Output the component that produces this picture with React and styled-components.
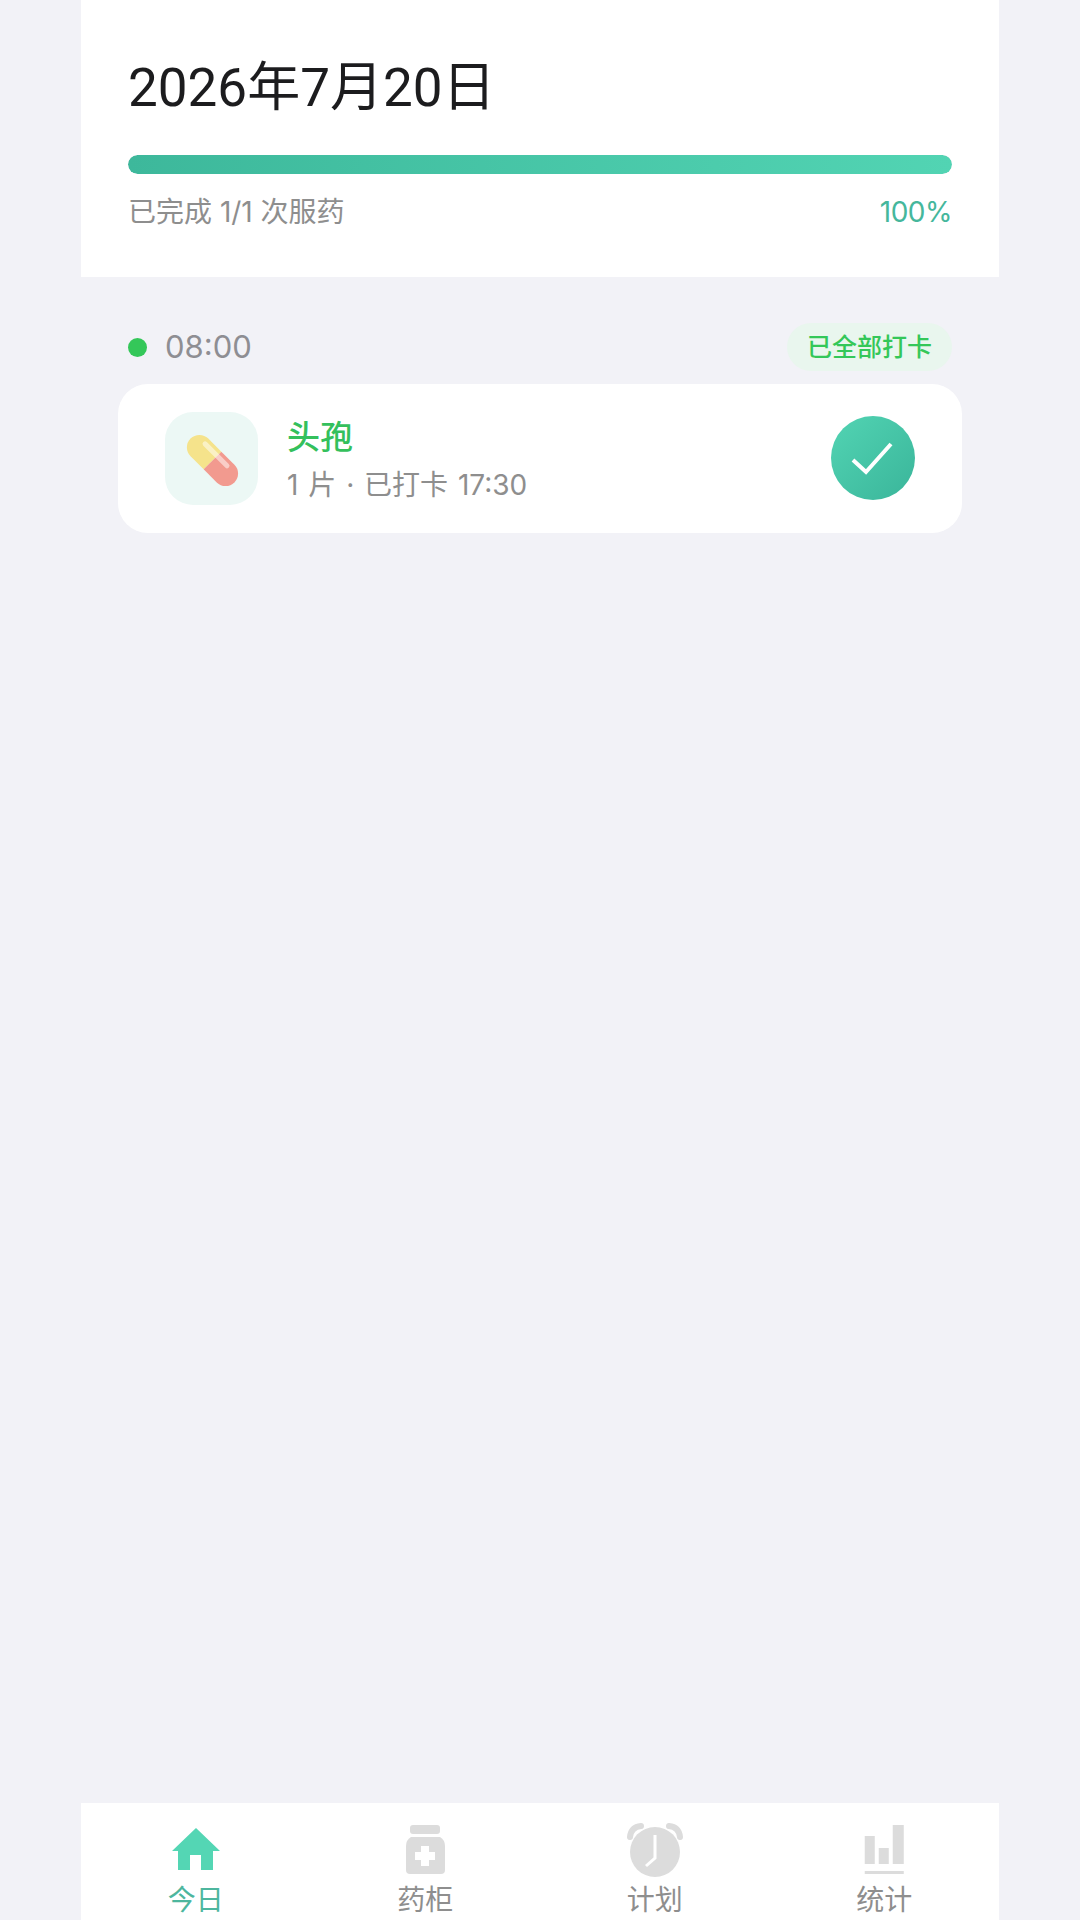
import styled, { createGlobalStyle } from 'styled-components';

const GlobalStyle = createGlobalStyle`
  html, body {
    margin: 0;
    padding: 0;
    background: #f2f2f7;
  }

  body {
    font-family: Inter, "Noto Sans CJK SC", "Noto Sans", sans-serif;
  }
`;

const Page = styled.div`
  width: 918px;
  height: 1920px;
  margin: 0 auto;
  display: flex;
  flex-direction: column;
  overflow: hidden;
`;

const SummaryPanel = styled.header`
  background: #ffffff;
  padding: 52px 47px 47px;
`;

const DateTitle = styled.h1`
  margin: 0 0 31px;
  font-family: Roboto, "Noto Sans CJK SC", sans-serif;
  font-size: 53px;
  line-height: 72px;
  font-weight: 400;
  color: #1c1c1e;
`;

const ProgressTrack = styled.div`
  height: 19px;
  border-radius: 10px;
  background: #e5e5ea;
  overflow: hidden;
`;

const ProgressFill = styled.div`
  height: 100%;
  border-radius: 10px;
  background: linear-gradient(90deg, #3db89b, #52d4b3);
`;

const ProgressInfo = styled.div`
  margin-top: 20px;
  display: flex;
  justify-content: space-between;
  align-items: center;
  line-height: 36px;
  font-size: 28px;
  color: #8e8e8e;
`;

const Percent = styled.span`
  color: #45b79c;
  font-size: 28px;
  letter-spacing: -0.5px;
`;

const Content = styled.main`
  flex: 1;
  padding: 46px 37px 0;
`;

const SlotHeader = styled.div`
  display: flex;
  align-items: center;
  padding: 0 10px;
  margin-bottom: 13px;
`;

const Dot = styled.span`
  width: 19px;
  height: 19px;
  border-radius: 50%;
  background: #34c759;
  margin-right: 18px;
`;

const SlotTime = styled.span`
  flex: 1;
  font-size: 31px;
  line-height: 48px;
  color: #8e8e93;
`;

const DoneBadge = styled.span`
  height: 48px;
  line-height: 48px;
  padding: 0 20px;
  border-radius: 24px;
  background: #e9f6ee;
  color: #34c759;
  font-size: 25px;
  font-weight: 500;
`;

const MedCard = styled.div`
  height: 149px;
  box-sizing: border-box;
  padding: 0 47px 1px;
  border-radius: 30px;
  background: #ffffff;
  display: flex;
  align-items: center;
`;

const MedIcon = styled.div`
  width: 93px;
  height: 93px;
  border-radius: 28px;
  background: #ecf8f5;
  margin-right: 29px;
  flex: none;

  svg {
    display: block;
  }
`;

const MedText = styled.div`
  flex: 1;
  display: flex;
  flex-direction: column;
`;

const MedName = styled.div`
  font-size: 33px;
  line-height: 44px;
  font-weight: 500;
  color: #34c05c;
`;

const MedDetail = styled.div`
  margin-top: 8px;
  margin-bottom: -2px;
  font-size: 28px;
  line-height: 36px;
  color: #8e8e8e;
  word-spacing: 2px;
`;

const CheckCircle = styled.div`
  width: 84px;
  height: 84px;
  border-radius: 50%;
  background: linear-gradient(135deg, #52d4b3, #3ab59a);
  flex: none;

  svg {
    display: block;
  }
`;

const TabBar = styled.nav`
  height: 117px;
  box-sizing: border-box;
  padding-top: 19px;
  background: #ffffff;
  display: grid;
  grid-template-columns: repeat(4, 1fr);
`;

const Tab = styled.div`
  display: flex;
  flex-direction: column;
  align-items: center;
  gap: 4px;
  color: ${(p) => (p.$active ? '#4db69e' : '#8e8e8e')};
  font-size: 28px;
  line-height: 36px;

  svg {
    display: block;
  }
`;

const GRAY = '#dcdcdc';

const PillIcon = () => (
  <svg width="93" height="93" viewBox="0 0 93 93">
    <g transform="rotate(45 47.5 48.5)">
      <path d="M47.5 36 H29 a12.5 12.5 0 0 0 0 25 H47.5 Z" fill="#f5e38b" />
      <path d="M47.5 36 H66 a12.5 12.5 0 0 1 0 25 H47.5 Z" fill="#f29a8f" />
      <rect x="28" y="39.5" width="36" height="5" rx="2.5" fill="#ffffff" opacity="0.5" />
    </g>
  </svg>
);

const CheckIcon = () => (
  <svg width="84" height="84" viewBox="0 0 84 84">
    <path d="M22 44 L35 56 L60 28" fill="none" stroke="#ffffff" strokeWidth="4" />
  </svg>
);

const HomeIcon = () => (
  <svg width="60" height="56" viewBox="0 0 60 56">
    <path
      d="M30 6 L54 29 H47 V48 H35 V33 H24 V48 H12 V29 H6 Z"
      fill="#54d6b4"
    />
  </svg>
);

const CabinetIcon = () => (
  <svg width="60" height="56" viewBox="0 0 60 56">
    <rect x="15" y="3" width="30" height="9" rx="3" fill={GRAY} />
    <path
      d="M16 15 H45 Q50 18 50 24 V48 Q50 52 46 52 H15 Q11 52 11 48 V24 Q11 18 16 15 Z"
      fill={GRAY}
    />
    <path d="M26 24 H34 V30 H40 V38 H34 V44 H26 V38 H20 V30 H26 Z" fill="#ffffff" />
  </svg>
);

const ClockIcon = () => (
  <svg width="60" height="56" viewBox="0 0 60 56">
    <circle cx="30" cy="30" r="25" fill={GRAY} />
    <path d="M5 15 Q6 5 16 4" fill="none" stroke={GRAY} strokeWidth="6" strokeLinecap="round" />
    <path d="M55 15 Q54 5 44 4" fill="none" stroke={GRAY} strokeWidth="6" strokeLinecap="round" />
    <path d="M30 13 V36 L21 44" fill="none" stroke="#ffffff" strokeWidth="3" />
  </svg>
);

const StatsIcon = () => (
  <svg width="60" height="56" viewBox="0 0 60 56" fill={GRAY}>
    <rect x="10.75" y="14" width="10" height="28" />
    <rect x="24.75" y="26" width="10" height="16" />
    <rect x="38.75" y="3" width="11" height="39" />
    <rect x="10.75" y="49" width="39" height="3" />
  </svg>
);

const tabs = [
  { label: '今日', icon: <HomeIcon />, active: true },
  { label: '药柜', icon: <CabinetIcon /> },
  { label: '计划', icon: <ClockIcon /> },
  { label: '统计', icon: <StatsIcon /> },
];

const App = () => (
  <>
    <GlobalStyle />
    <Page>
      <SummaryPanel>
        <DateTitle>2026年7月20日</DateTitle>
        <ProgressTrack>
          <ProgressFill style={{ width: '100%' }} />
        </ProgressTrack>
        <ProgressInfo>
          <span>已完成 1/1 次服药</span>
          <Percent>100%</Percent>
        </ProgressInfo>
      </SummaryPanel>
      <Content>
        <SlotHeader>
          <Dot />
          <SlotTime>08:00</SlotTime>
          <DoneBadge>已全部打卡</DoneBadge>
        </SlotHeader>
        <MedCard>
          <MedIcon>
            <PillIcon />
          </MedIcon>
          <MedText>
            <MedName>头孢</MedName>
            <MedDetail>1 片 · 已打卡 17:30</MedDetail>
          </MedText>
          <CheckCircle>
            <CheckIcon />
          </CheckCircle>
        </MedCard>
      </Content>
      <TabBar>
        {tabs.map((tab) => (
          <Tab key={tab.label} $active={tab.active}>
            {tab.icon}
            {tab.label}
          </Tab>
        ))}
      </TabBar>
    </Page>
  </>
);

export default App;
